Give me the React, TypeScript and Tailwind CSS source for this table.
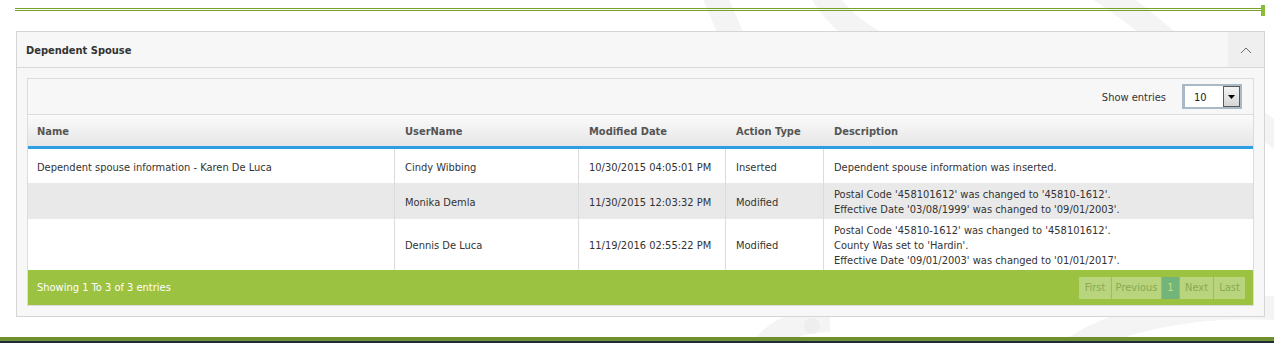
import React from "react";

type Row = {
  name: string;
  user: string;
  date: string;
  action: string;
  desc: string[];
  shaded?: boolean;
  height: string;
};

const rows: Row[] = [
  {
    name: "Dependent spouse information - Karen De Luca",
    user: "Cindy Wibbing",
    date: "10/30/2015 04:05:01 PM",
    action: "Inserted",
    desc: ["Dependent spouse information was inserted."],
    height: "h-[34px]",
  },
  {
    name: "",
    user: "Monika Demla",
    date: "11/30/2015 12:03:32 PM",
    action: "Modified",
    desc: [
      "Postal Code '458101612' was changed to '45810-1612'.",
      "Effective Date '03/08/1999' was changed to '09/01/2003'.",
    ],
    shaded: true,
    height: "h-[36px]",
  },
  {
    name: "",
    user: "Dennis De Luca",
    date: "11/19/2016 02:55:22 PM",
    action: "Modified",
    desc: [
      "Postal Code '45810-1612' was changed to '458101612'.",
      "County Was set to 'Hardin'.",
      "Effective Date '09/01/2003' was changed to '01/01/2017'.",
    ],
    height: "h-[51px]",
  },
];

const cols = "grid grid-cols-[367px_184px_147px_98px_1fr]";

function Backdrop() {
  // faint decorative swirls behind the page content
  return (
    <svg
      className="absolute inset-0 pointer-events-none"
      width="1274"
      height="343"
      viewBox="0 0 1274 343"
    >
      <g fill="none" stroke="#f4f4f4" strokeWidth="24">
        <path d="M712 -10 L742 60" />
        <path d="M820 -10 C 850 40, 900 60, 960 60" />
        <path d="M1100 -10 C 1180 40, 1240 120, 1300 150" />
        <path d="M1060 360 C 1100 320, 1200 300, 1300 310" />
        <path d="M760 360 C 760 340, 790 320, 830 320" />
      </g>
      <circle cx="812" cy="326" r="8" fill="#eeeeee" />
    </svg>
  );
}

function Chevron() {
  return (
    <svg width="12" height="8" viewBox="0 0 12 8" fill="none">
      <path d="M1 7 L6 2 L11 7" stroke="#6b6b6b" strokeWidth="1" />
    </svg>
  );
}

function EntriesSelect() {
  return (
    <div className="flex h-[25px] w-[60px] border-y-2 border-l-[3px] border-r-2 border-[#a9b9c6] bg-white">
      <div className="flex flex-1 items-center pl-[9px] pt-[3px] text-[11px] text-[#222]">10</div>
      <div className="flex w-[17px] items-center justify-center border border-[#5a5a5a] bg-gradient-to-b from-[#f4f4f4] to-[#d6d6d6]">
        <svg width="7" height="4" viewBox="0 0 7 4">
          <path d="M0 0 H7 L3.5 4 Z" fill="#000" />
        </svg>
      </div>
    </div>
  );
}

function Pager() {
  const btn = "flex h-[22px] items-center justify-center pt-[2px] bg-[#b8d47c] text-[#89aa55]";
  return (
    <div className="flex gap-[1px] text-[11px]">
      <div className={`${btn} w-[32px]`}>First</div>
      <div className={`${btn} w-[49px]`}>Previous</div>
      <div className="flex h-[22px] w-[17px] items-center justify-center bg-[#72b57a] pt-[2px] text-[#c8df80]">1</div>
      <div className={`${btn} w-[33px]`}>Next</div>
      <div className={`${btn} w-[31px]`}>Last</div>
    </div>
  );
}

export default function App() {
  const cell = "flex flex-col justify-center pt-[2px] leading-[15px]";
  return (
    <div className="relative h-[343px] w-[1274px] overflow-hidden bg-white font-['DejaVu_Sans_Condensed','DejaVu_Sans',sans-serif] text-[11px] text-[#333]">
      <Backdrop />

      <div className="relative flex h-[343px] flex-col">
        {/* top rule */}
        <div className="relative ml-[15px] mr-[9px] mt-[8px] h-[3px] border-y border-[#76a02a]">
          <div className="absolute right-0 top-[-4px] h-[11px] w-[4px] bg-[#8cbb3a]" />
        </div>

        {/* panel */}
        <div className="ml-[16px] mr-[9px] mt-[20px] border border-[#d5d5d5] bg-[#f7f7f7]">
          <div className="flex h-[36px] items-stretch border-b border-[#d8d8d8]">
            <div className="flex flex-1 items-center pl-[9px] pt-[3px] text-[11px] font-bold text-[#333]">
              Dependent Spouse
            </div>
            <div className="flex w-[36px] items-center justify-center bg-[#efefef]">
              <Chevron />
            </div>
          </div>

          <div className="p-[10px]">
            <div className="border border-[#dcdcdc] bg-white">
              <div className="flex h-[36px] items-center justify-end gap-[16px] border-b border-[#dcdcdc] bg-[#f7f7f7] pr-[11px]">
                <span className="pt-[3px] text-[#333]">Show entries</span>
                <EntriesSelect />
              </div>

              {/* column headings */}
              <div className={`${cols} h-[34px] border-b-[3px] border-[#2e9fe4] bg-gradient-to-b from-[#fbfbfb] to-[#e6e6e6] font-bold text-[#555]`}>
                <div className={`${cell} pl-[9px]`}>Name</div>
                <div className={`${cell} pl-[10px]`}>UserName</div>
                <div className={`${cell} pl-[10px]`}>Modified Date</div>
                <div className={`${cell} pl-[10px]`}>Action Type</div>
                <div className={`${cell} pl-[10px]`}>Description</div>
              </div>

              {rows.map((r, i) => (
                <div
                  key={i}
                  className={`${cols} ${r.height} ${r.shaded ? "bg-[#e9e9e9]" : "bg-white"}`}
                >
                  <div className={`${cell} border-r border-[#dcdcdc] pl-[9px]`}>{r.name}</div>
                  <div className={`${cell} border-r border-[#dcdcdc] pl-[10px]`}>{r.user}</div>
                  <div className={`${cell} border-r border-[#dcdcdc] pl-[10px]`}>{r.date}</div>
                  <div className={`${cell} border-r border-[#dcdcdc] pl-[10px]`}>{r.action}</div>
                  <div className={`${cell} pl-[10px]`}>
                    {r.desc.map((d, j) => (
                      <div key={j}>{d}</div>
                    ))}
                  </div>
                </div>
              ))}

              <div className="flex h-[35px] items-center justify-between bg-[#9cc242] pl-[9px] pr-[8px]">
                <span className="pt-[2px] text-white">Showing 1 To 3 of 3 entries</span>
                <Pager />
              </div>
            </div>
          </div>
        </div>

        <div className="flex-1" />
        {/* bottom band */}
        <div className="h-[4px] bg-[#6e9030]" />
        <div className="h-[2px] bg-[#1f2b3a]" />
      </div>
    </div>
  );
}
